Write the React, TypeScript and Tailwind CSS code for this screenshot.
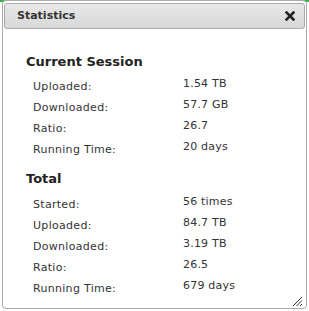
import React from "react";

/* ── Data ─────────────────────────────────────────── */
const SESSION = [
  { label: "Uploaded:", value: "1.54 TB" },
  { label: "Downloaded:", value: "57.7 GB" },
  { label: "Ratio:", value: "26.7" },
  { label: "Running Time:", value: "20 days" },
];

const TOTAL = [
  { label: "Started:", value: "56 times" },
  { label: "Uploaded:", value: "84.7 TB" },
  { label: "Downloaded:", value: "3.19 TB" },
  { label: "Ratio:", value: "26.5" },
  { label: "Running Time:", value: "679 days" },
];

function StatRows({ rows }: { rows: { label: string; value: string }[] }) {
  return (
    <div className="flex flex-col">
      {rows.map((r) => (
        <div key={r.label} className="flex h-[21px] items-start">
          <span className="mt-[3px] w-[157px] pl-[7px] leading-[15px] tracking-[0.3px]">{r.label}</span>
          <span className="leading-[15px] tracking-[0.2px]">{r.value}</span>
        </div>
      ))}
    </div>
  );
}

export default function App() {
  return (
    <div className="h-[311px] w-[309px] bg-[linear-gradient(to_bottom,#3fae49_0px,#3fae49_2px,#ffffff_2px)] font-['DejaVu_Sans',sans-serif] text-[11px] text-[#333]">
      <div className="ml-[2px] flex h-[309px] w-[305px] flex-col rounded-[4px] border border-[#aaaaaa] bg-white px-[1px] pt-[2px]">
        {/* Title bar */}
        <div className="flex h-[26px] items-center justify-between rounded-[3px] border border-[#aaaaaa] bg-[linear-gradient(to_bottom,#e8e8e8,#d8d8d8)] pl-[12px] pr-[9px]">
          <span className="text-[11px] font-bold text-[#333]">Statistics</span>
          <svg width="10" height="10" viewBox="0 0 10 10">
            <path d="M1.5 1.5 L8.5 8.5 M8.5 1.5 L1.5 8.5" stroke="#222" strokeWidth="2.6" strokeLinecap="square" />
          </svg>
        </div>

        {/* Content */}
        <div className="relative flex-1 pl-[22px]">
          <div className="mt-[23px] text-[13px] font-bold leading-[20px] text-[#222]">Current Session</div>
          <div className="mt-[4px]">
            <StatRows rows={SESSION} />
          </div>
          <div className="mt-[9px] text-[13px] font-bold leading-[20px] text-[#222]">Total</div>
          <div className="mt-[5px]">
            <StatRows rows={TOTAL} />
          </div>

          {/* Resize grip */}
          <svg className="absolute bottom-[1px] right-[2px]" width="11" height="11" viewBox="0 0 11 11">
            <path d="M10 1 L1 10 M10 4.5 L4.5 10 M10 8 L8 10" stroke="#333" strokeWidth="1" />
          </svg>
        </div>
      </div>
    </div>
  );
}
